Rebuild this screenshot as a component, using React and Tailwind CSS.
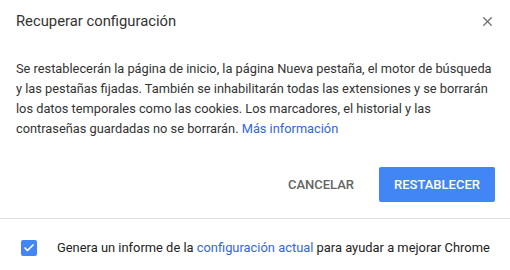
import { X, Check } from 'lucide-react';

const App = () => {
  return (
    <div className="w-[510px] h-[270px] bg-white font-['Roboto',sans-serif] overflow-hidden">
      {/* Header */}
      <div className="flex items-start justify-between pl-4 pr-[15px] pt-[11px]">
        <h1 className="text-[14.8px] leading-5 text-[#333333]">Recuperar configuración</h1>
        <button className="mt-[3px] text-[#6e6e6e]">
          <X className="h-[15px] w-[15px]" strokeWidth={2} />
        </button>
      </div>

      {/* Body */}
      <p className="px-4 mt-[28px] text-[12.8px] leading-[20px] text-[#333333] whitespace-nowrap">
        Se restablecerán la página de inicio, la página Nueva pestaña, el motor de búsqueda
        <br />
        y las pestañas fijadas. También se inhabilitarán todas las extensiones y se borrarán
        <br />
        los datos temporales como las cookies. Los marcadores, el historial y las
        <br />
        contraseñas guardadas no se borrarán.{' '}
        <a className="text-[#3367d6]">Más información</a>
      </p>

      {/* Actions */}
      <div className="flex items-center justify-end gap-[9px] pr-[15px] mt-[28px]">
        <button className="h-[35px] px-4 text-[13px] font-medium uppercase text-[#646464]">
          Cancelar
        </button>
        <button className="h-[35px] w-[116px] rounded-[2px] bg-[#4285f4] text-[13px] font-medium uppercase text-white">
          Restablecer
        </button>
      </div>

      {/* Footer */}
      <div className="mt-[16px] border-t border-[#e0e0e0] flex items-center pl-[21px] pt-[19px]">
        <span className="flex h-4 w-4 items-center justify-center rounded-[2px] bg-[#4285f4]">
          <Check className="h-3 w-3 text-white" strokeWidth={3.5} />
        </span>
        <span className="ml-5 text-[12.9px] text-[#222222] whitespace-nowrap">
          Genera un informe de la <a className="text-[#3367d6]">configuración actual</a> para ayudar a mejorar Chrome
        </span>
      </div>
    </div>
  );
};

export default App;
